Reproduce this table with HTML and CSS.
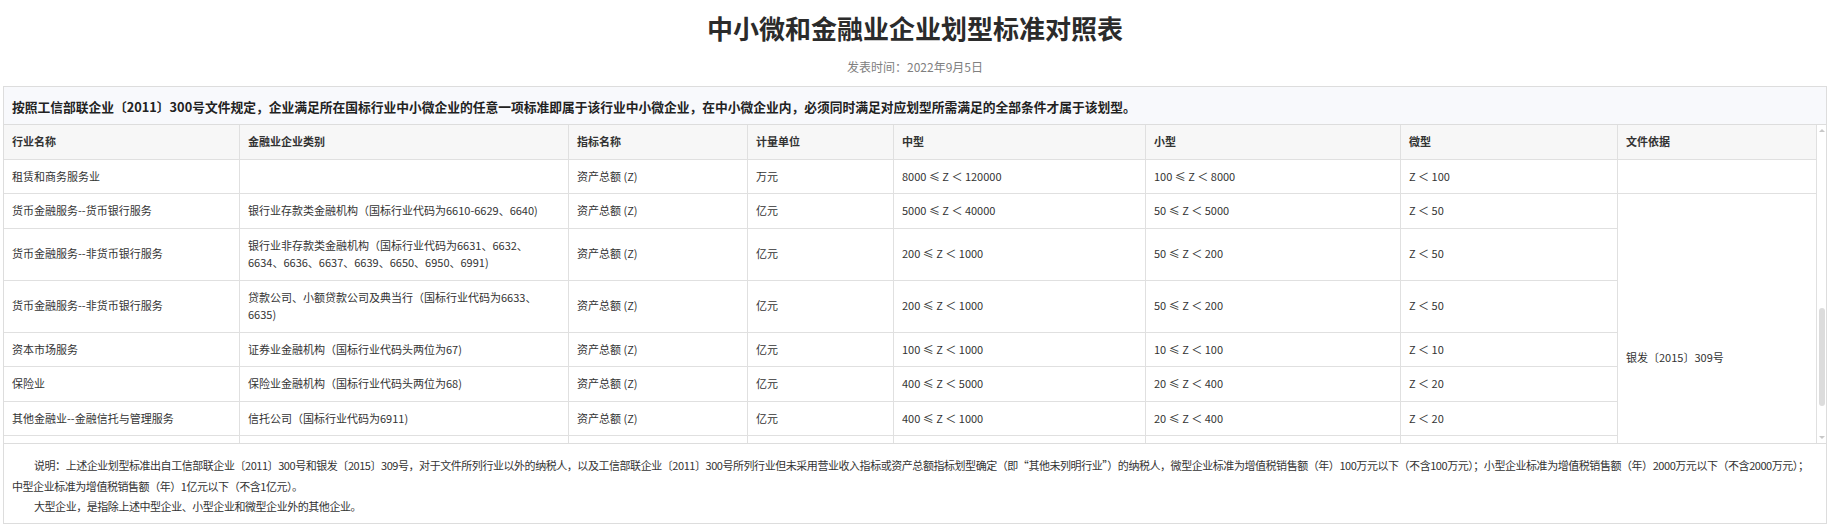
FILE: index.html
```html
<!DOCTYPE html>
<html lang="zh-CN">
<head>
<meta charset="utf-8">
<title>中小微和金融业企业划型标准对照表</title>
<link rel="stylesheet" href="styles.css">
</head>
<body>
<div class="page">
  <header class="head">
    <h1 class="title">中小微和金融业企业划型标准对照表</h1>
    <p class="date">发表时间：2022年9月5日</p>
  </header>
  <section class="panel">
    <div class="intro">按照工信部联企业〔2011〕300号文件规定，企业满足所在国标行业中小微企业的任意一项标准即属于该行业中小微企业，在中小微企业内，必须同时满足对应划型所需满足的全部条件才属于该划型。</div>
    <div class="table-wrap">
      <div class="viewport">
        <div class="grid" role="table">
          <div class="cell th">行业名称</div>
          <div class="cell th">金融业企业类别</div>
          <div class="cell th">指标名称</div>
          <div class="cell th">计量单位</div>
          <div class="cell th">中型</div>
          <div class="cell th">小型</div>
          <div class="cell th">微型</div>
          <div class="cell th">文件依据</div>

          <div class="cell">租赁和商务服务业</div>
          <div class="cell"></div>
          <div class="cell">资产总额 (Z)</div>
          <div class="cell">万元</div>
          <div class="cell">8000 ≤ Z ＜ 120000</div>
          <div class="cell">100 ≤ Z ＜ 8000</div>
          <div class="cell">Z ＜ 100</div>
          <div class="cell"></div>

          <div class="cell">货币金融服务--货币银行服务</div>
          <div class="cell">银行业存款类金融机构（国标行业代码为6610-6629、6640)</div>
          <div class="cell">资产总额 (Z)</div>
          <div class="cell">亿元</div>
          <div class="cell">5000 ≤ Z ＜ 40000</div>
          <div class="cell">50 ≤ Z ＜ 5000</div>
          <div class="cell">Z ＜ 50</div>
          <div class="cell basis">银发〔2015〕309号</div>

          <div class="cell">货币金融服务--非货币银行服务</div>
          <div class="cell">银行业非存款类金融机构（国标行业代码为6631、6632、6634、6636、6637、6639、6650、6950、6991)</div>
          <div class="cell">资产总额 (Z)</div>
          <div class="cell">亿元</div>
          <div class="cell">200 ≤ Z ＜ 1000</div>
          <div class="cell">50 ≤ Z ＜ 200</div>
          <div class="cell">Z ＜ 50</div>

          <div class="cell">货币金融服务--非货币银行服务</div>
          <div class="cell">贷款公司、小额贷款公司及典当行（国标行业代码为6633、6635)</div>
          <div class="cell">资产总额 (Z)</div>
          <div class="cell">亿元</div>
          <div class="cell">200 ≤ Z ＜ 1000</div>
          <div class="cell">50 ≤ Z ＜ 200</div>
          <div class="cell">Z ＜ 50</div>

          <div class="cell">资本市场服务</div>
          <div class="cell">证券业金融机构（国标行业代码头两位为67)</div>
          <div class="cell">资产总额 (Z)</div>
          <div class="cell">亿元</div>
          <div class="cell">100 ≤ Z ＜ 1000</div>
          <div class="cell">10 ≤ Z ＜ 100</div>
          <div class="cell">Z ＜ 10</div>

          <div class="cell">保险业</div>
          <div class="cell">保险业金融机构（国标行业代码头两位为68)</div>
          <div class="cell">资产总额 (Z)</div>
          <div class="cell">亿元</div>
          <div class="cell">400 ≤ Z ＜ 5000</div>
          <div class="cell">20 ≤ Z ＜ 400</div>
          <div class="cell">Z ＜ 20</div>

          <div class="cell">其他金融业--金融信托与管理服务</div>
          <div class="cell">信托公司（国标行业代码为6911)</div>
          <div class="cell">资产总额 (Z)</div>
          <div class="cell">亿元</div>
          <div class="cell">400 ≤ Z ＜ 1000</div>
          <div class="cell">20 ≤ Z ＜ 400</div>
          <div class="cell">Z ＜ 20</div>

          <div class="cell more"></div>
          <div class="cell more"></div>
          <div class="cell more"></div>
          <div class="cell more"></div>
          <div class="cell more"></div>
          <div class="cell more"></div>
          <div class="cell more"></div>
        </div>
      </div>
      <div class="scrollbar" aria-hidden="true">
        <span class="arrow up"></span>
        <div class="track"><span class="thumb"></span></div>
        <span class="arrow down"></span>
      </div>
    </div>
    <div class="notes">
      <p>说明：上述企业划型标准出自工信部联企业〔2011〕300号和银发〔2015〕309号，对于文件所列行业以外的纳税人，以及工信部联企业〔2011〕300号所列行业但未采用营业收入指标或资产总额指标划型确定（即“其他未列明行业”）的纳税人，微型企业标准为增值税销售额（年）100万元以下（不含100万元）；小型企业标准为增值税销售额（年）2000万元以下（不含2000万元）；中型企业标准为增值税销售额（年）1亿元以下（不含1亿元）。</p>
      <p>大型企业，是指除上述中型企业、小型企业和微型企业外的其他企业。</p>
    </div>
  </section>
</div>
</body>
</html>
```

FILE: styles.css
```css
html, body {
  margin: 0;
  padding: 0;
  background: #ffffff;
}

body {
  font-family: "Noto Sans CJK SC", "Noto Sans", "Liberation Sans", sans-serif;
  color: #333333;
}

.page {
  padding: 0 2px 0 3px;
}

.head {
  padding-top: 10px;
  text-align: center;
}

.title {
  margin: 0;
  font-size: 26px;
  line-height: 35px;
  font-weight: 700;
  color: #2b2b2b;
}

.date {
  margin: 14px 0 11px;
  font-size: 12px;
  line-height: 16px;
  color: #808080;
}

.panel {
  border: 1px solid #dddddd;
}

.intro {
  padding: 11px 8px 9px;
  font-size: 12.75px;
  line-height: 17px;
  font-weight: 700;
  color: #222222;
  background: #f8f9fc;
  border-bottom: 1px solid #dddddd;
}

.table-wrap {
  display: flex;
  height: 318px;
  border-bottom: 1px solid #dddddd;
}

.viewport {
  flex: 1;
  overflow: hidden;
}

.grid {
  display: grid;
  grid-template-columns: 236px 329px 179px 146px 252px 255px 217px 199px;
  font-size: 11px;
  line-height: 17.5px;
  color: #333333;
}

.cell {
  box-sizing: border-box;
  display: flex;
  align-items: center;
  padding: 8px 8px;
  border-right: 1px solid #e0e0e0;
  border-bottom: 1px solid #e0e0e0;
  background: #ffffff;
}

.th {
  font-weight: 700;
  background: #f7f7f7;
}

.basis {
  grid-row: span 7;
}

.more {
  min-height: 86px;
}

.scrollbar {
  width: 9px;
  display: flex;
  flex-direction: column;
  align-items: center;
  background: #ffffff;
}

.arrow {
  width: 0;
  height: 0;
  border-left: 3px solid transparent;
  border-right: 3px solid transparent;
}

.arrow.up {
  margin: 4px 0 3px;
  border-bottom: 3px solid #c8c8c8;
}

.arrow.down {
  margin: 3px 0 4px;
  border-top: 3px solid #c8c8c8;
}

.track {
  flex: 1;
  width: 100%;
  display: flex;
  justify-content: center;
}

.thumb {
  width: 6px;
  height: 98px;
  margin-top: 173px;
  border-radius: 3px;
  background: #dcdcdc;
}

.notes {
  padding: 11px 8px 6px;
  font-size: 11px;
  line-height: 20.5px;
  letter-spacing: -0.45px;
  color: #333333;
}

.notes p {
  margin: 0;
  text-indent: 22px;
}
```
